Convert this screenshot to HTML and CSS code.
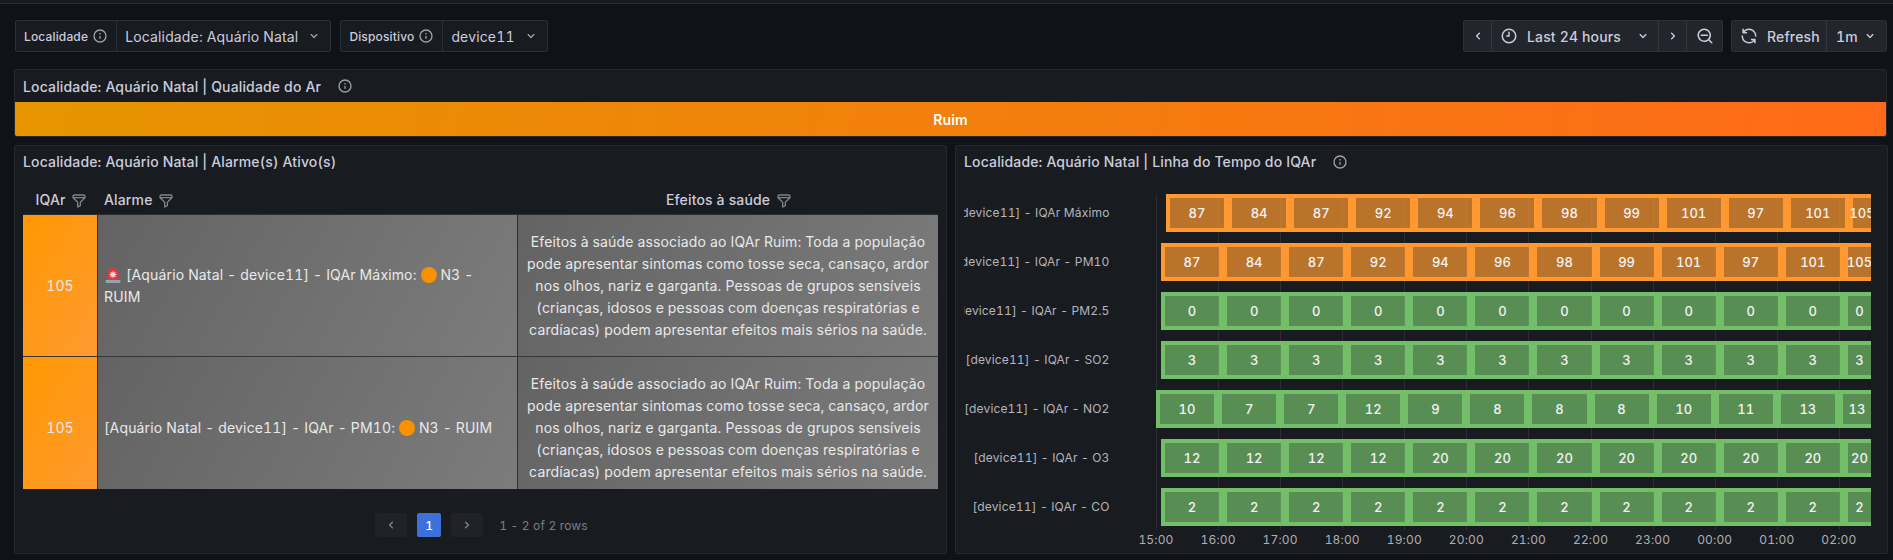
FILE: index.html
```html
<!DOCTYPE html>
<html lang="pt-BR">
  <head>
    <meta charset="UTF-8" />
    <title>Qualidade do Ar</title>
    <link rel="stylesheet" href="styles.css">
  </head>
  <body>
    <svg class="defs" aria-hidden="true">
      <symbol id="i-info" viewBox="0 0 24 24"><path d="M12,2A10,10,0,1,0,22,12,10.01,10.01,0,0,0,12,2Zm0,18a8,8,0,1,1,8-8A8.01,8.01,0,0,1,12,20Zm0-8.5a1,1,0,0,0-1,1v3a1,1,0,0,0,2,0v-3A1,1,0,0,0,12,11.5Zm0-4a1.25,1.25,0,1,0,1.25,1.25A1.25,1.25,0,0,0,12,7.5Z"/></symbol>
      <symbol id="i-down" viewBox="0 0 24 24"><path d="M17,9.17a1,1,0,0,0-1.41,0L12,12.71,8.46,9.17a1,1,0,0,0-1.41,0,1,1,0,0,0,0,1.42l4.24,4.24a1,1,0,0,0,1.42,0L17,10.59A1,1,0,0,0,17,9.17Z"/></symbol>
      <symbol id="i-left" viewBox="0 0 24 24"><path d="M11.29,12l3.54-3.54a1,1,0,0,0,0-1.41,1,1,0,0,0-1.42,0L9.17,11.29a1,1,0,0,0,0,1.42L13.41,17a1,1,0,0,0,.71.29,1,1,0,0,0,.71-.29,1,1,0,0,0,0-1.41Z"/></symbol>
      <symbol id="i-right" viewBox="0 0 24 24"><path d="M14.83,11.29,10.59,7.05a1,1,0,0,0-1.42,0,1,1,0,0,0,0,1.41L12.71,12,9.17,15.54a1,1,0,0,0,0,1.41,1,1,0,0,0,.71.29,1,1,0,0,0,.71-.29l4.24-4.24A1,1,0,0,0,14.83,11.29Z"/></symbol>
      <symbol id="i-clock" viewBox="0 0 24 24"><path d="M12,2A10,10,0,1,0,22,12,10,10,0,0,0,12,2Zm0,18a8,8,0,1,1,8-8A8,8,0,0,1,12,20Zm0-14a1,1,0,0,0-1,1v4H9a1,1,0,0,0,0,2h3a1,1,0,0,0,1-1V7A1,1,0,0,0,12,6Z"/></symbol>
      <symbol id="i-zoom" viewBox="0 0 24 24"><path d="M21.71,20.29,18,16.61A9,9,0,1,0,16.61,18l3.68,3.68a1,1,0,0,0,1.42,0A1,1,0,0,0,21.71,20.29ZM11,18a7,7,0,1,1,7-7A7,7,0,0,1,11,18Zm4-8H7a1,1,0,0,0,0,2h8a1,1,0,0,0,0-2Z"/></symbol>
      <symbol id="i-sync" viewBox="0 0 24 24"><path d="M19.91,15.51H15.38a1,1,0,0,0,0,2h2.4A8,8,0,0,1,4,12a1,1,0,0,0-2,0,10,10,0,0,0,16.88,7.23V21a1,1,0,0,0,2,0V16.5A1,1,0,0,0,19.91,15.51ZM12,2A10,10,0,0,0,5.12,4.77V3a1,1,0,0,0-2,0V7.5a1,1,0,0,0,1,1h4.5a1,1,0,0,0,0-2H6.22A8,8,0,0,1,20,12a1,1,0,0,0,2,0A10,10,0,0,0,12,2Z"/></symbol>
      <symbol id="i-filter" viewBox="0 0 24 24"><path d="M19,2H5A3,3,0,0,0,2,5V6.17a3,3,0,0,0,.25,1.2l0,.06a2.81,2.81,0,0,0,.59.86L9,14.41V21a1,1,0,0,0,.47.85A1,1,0,0,0,10,22a1,1,0,0,0,.45-.11l4-2A1,1,0,0,0,15,19V14.41l6.12-6.12a2.81,2.81,0,0,0,.59-.86l0-.06A3,3,0,0,0,22,6.17V5A3,3,0,0,0,19,2ZM13.29,13.29A1,1,0,0,0,13,14v4.38l-2,1V14a1,1,0,0,0-.29-.71L5.41,8H18.59ZM20,6H4V5A1,1,0,0,1,5,4H19a1,1,0,0,1,1,1Z"/></symbol>
      <symbol id="i-siren" viewBox="0 0 18 18">
        <path d="M3.5 14V7.5a5.5 5.5 0 0 1 11 0V14z" fill="#e0393e"/>
        <path d="M9 4.5l.8 2.2 2.1-1-1 2.1 2.2.8-2.2.8 1 2.1-2.1-1-.8 2.2-.8-2.2-2.1 1 1-2.1-2.2-.8 2.2-.8-1-2.1 2.1 1z" fill="#fbd5d0"/>
        <rect x="1.5" y="14" width="15" height="3" rx="1" fill="#8fa6b8"/>
      </symbol>
    </svg>

    <div class="topline"></div>

    <main class="page">
      <div class="toolbar">
        <div class="var">
          <label class="var-label">Localidade <svg class="ico-16"><use href="#i-info"/></svg></label>
          <div class="var-value">Localidade: Aquário Natal <svg class="ico-16 chev"><use href="#i-down"/></svg></div>
        </div>
        <div class="var">
          <label class="var-label">Dispositivo <svg class="ico-16"><use href="#i-info"/></svg></label>
          <div class="var-value">device11 <svg class="ico-16 chev"><use href="#i-down"/></svg></div>
        </div>
        <div class="spacer"></div>
        <div class="btn-group">
          <button class="btn btn-arrow"><svg class="ico-16"><use href="#i-left"/></svg></button>
          <button class="btn btn-range"><svg class="ico-18"><use href="#i-clock"/></svg><span>Last 24 hours</span><svg class="ico-16 chev-push"><use href="#i-down"/></svg></button>
          <button class="btn btn-arrow"><svg class="ico-16"><use href="#i-right"/></svg></button>
          <button class="btn btn-zoom"><svg class="ico-18"><use href="#i-zoom"/></svg></button>
        </div>
        <div class="btn-group">
          <button class="btn btn-refresh"><svg class="ico-18"><use href="#i-sync"/></svg><span>Refresh</span></button>
          <button class="btn btn-interval"><span>1m</span><svg class="ico-16"><use href="#i-down"/></svg></button>
        </div>
      </div>

      <section class="panel panel-status">
        <h2 class="panel-title">Localidade: Aquário Natal | Qualidade do Ar <svg class="ico-16 title-info"><use href="#i-info"/></svg></h2>
        <div class="status-bar">Ruim</div>
      </section>

      <div class="panels">
        <section class="panel">
          <h2 class="panel-title">Localidade: Aquário Natal | Alarme(s) Ativo(s)</h2>
          <div class="table-wrap">
            <table class="alarms">
              <thead>
                <tr>
                  <th class="center">IQAr <svg class="ico-16 filter"><use href="#i-filter"/></svg></th>
                  <th>Alarme <svg class="ico-16 filter"><use href="#i-filter"/></svg></th>
                  <th class="center">Efeitos à saúde <svg class="ico-16 filter"><use href="#i-filter"/></svg></th>
                </tr>
              </thead>
              <tbody>
                <tr>
                  <td class="cell-iqar">105</td>
                  <td class="cell-gray"><svg class="emoji"><use href="#i-siren"/></svg> [Aquário Natal - device11] - IQAr Máximo: <span class="dot"></span> N3 - RUIM</td>
                  <td class="cell-gray center">Efeitos à saúde associado ao IQAr Ruim: Toda a população pode apresentar sintomas como tosse seca, cansaço, ardor nos olhos, nariz e garganta. Pessoas de grupos sensíveis (crianças, idosos e pessoas com doenças respiratórias e cardíacas) podem apresentar efeitos mais sérios na saúde.</td>
                </tr>
                <tr>
                  <td class="cell-iqar">105</td>
                  <td class="cell-gray">[Aquário Natal - device11] - IQAr - PM10: <span class="dot"></span> N3 - RUIM</td>
                  <td class="cell-gray center">Efeitos à saúde associado ao IQAr Ruim: Toda a população pode apresentar sintomas como tosse seca, cansaço, ardor nos olhos, nariz e garganta. Pessoas de grupos sensíveis (crianças, idosos e pessoas com doenças respiratórias e cardíacas) podem apresentar efeitos mais sérios na saúde.</td>
                </tr>
              </tbody>
            </table>
          </div>
          <div class="pager">
            <button class="page-btn"><svg class="ico-16"><use href="#i-left"/></svg></button>
            <button class="page-num">1</button>
            <button class="page-btn"><svg class="ico-16"><use href="#i-right"/></svg></button>
            <span class="page-info">1 - 2 of 2 rows</span>
          </div>
        </section>

        <section class="panel">
          <h2 class="panel-title">Localidade: Aquário Natal | Linha do Tempo do IQAr <svg class="ico-16 title-info"><use href="#i-info"/></svg></h2>
          <div class="timeline">
            <div class="grid">
              <div class="tick"><span>15:00</span></div>
              <div class="tick"><span>16:00</span></div>
              <div class="tick"><span>17:00</span></div>
              <div class="tick"><span>18:00</span></div>
              <div class="tick"><span>19:00</span></div>
              <div class="tick"><span>20:00</span></div>
              <div class="tick"><span>21:00</span></div>
              <div class="tick"><span>22:00</span></div>
              <div class="tick"><span>23:00</span></div>
              <div class="tick"><span>00:00</span></div>
              <div class="tick"><span>01:00</span></div>
              <div class="tick"><span>02:00</span></div>
            </div>

            <div class="row">
              <div class="row-label"><span>[device11] - IQAr Máximo</span></div>
              <div class="track off-10 orange">
                <div class="seg">87</div><div class="seg">84</div><div class="seg">87</div><div class="seg">92</div><div class="seg">94</div><div class="seg">96</div><div class="seg">98</div><div class="seg">99</div><div class="seg">101</div><div class="seg">97</div><div class="seg">101</div><div class="seg">105</div>
              </div>
            </div>
            <div class="row">
              <div class="row-label"><span>[device11] - IQAr - PM10</span></div>
              <div class="track off-5 orange">
                <div class="seg">87</div><div class="seg">84</div><div class="seg">87</div><div class="seg">92</div><div class="seg">94</div><div class="seg">96</div><div class="seg">98</div><div class="seg">99</div><div class="seg">101</div><div class="seg">97</div><div class="seg">101</div><div class="seg">105</div>
              </div>
            </div>
            <div class="row">
              <div class="row-label"><span>[device11] - IQAr - PM2.5</span></div>
              <div class="track off-5 green">
                <div class="seg">0</div><div class="seg">0</div><div class="seg">0</div><div class="seg">0</div><div class="seg">0</div><div class="seg">0</div><div class="seg">0</div><div class="seg">0</div><div class="seg">0</div><div class="seg">0</div><div class="seg">0</div><div class="seg">0</div>
              </div>
            </div>
            <div class="row">
              <div class="row-label"><span>[device11] - IQAr - SO2</span></div>
              <div class="track off-5 green">
                <div class="seg">3</div><div class="seg">3</div><div class="seg">3</div><div class="seg">3</div><div class="seg">3</div><div class="seg">3</div><div class="seg">3</div><div class="seg">3</div><div class="seg">3</div><div class="seg">3</div><div class="seg">3</div><div class="seg">3</div>
              </div>
            </div>
            <div class="row">
              <div class="row-label"><span>[device11] - IQAr - NO2</span></div>
              <div class="track green">
                <div class="seg">10</div><div class="seg">7</div><div class="seg">7</div><div class="seg">12</div><div class="seg">9</div><div class="seg">8</div><div class="seg">8</div><div class="seg">8</div><div class="seg">10</div><div class="seg">11</div><div class="seg">13</div><div class="seg">13</div>
              </div>
            </div>
            <div class="row">
              <div class="row-label"><span>[device11] - IQAr - O3</span></div>
              <div class="track off-5 green">
                <div class="seg">12</div><div class="seg">12</div><div class="seg">12</div><div class="seg">12</div><div class="seg">20</div><div class="seg">20</div><div class="seg">20</div><div class="seg">20</div><div class="seg">20</div><div class="seg">20</div><div class="seg">20</div><div class="seg">20</div>
              </div>
            </div>
            <div class="row">
              <div class="row-label"><span>[device11] - IQAr - CO</span></div>
              <div class="track off-5 green">
                <div class="seg">2</div><div class="seg">2</div><div class="seg">2</div><div class="seg">2</div><div class="seg">2</div><div class="seg">2</div><div class="seg">2</div><div class="seg">2</div><div class="seg">2</div><div class="seg">2</div><div class="seg">2</div><div class="seg">2</div>
              </div>
            </div>
          </div>
        </section>
      </div>
    </main>
  </body>
</html>
```

FILE: styles.css
```css
* {
  box-sizing: border-box;
}
html,
body {
  margin: 0;
  height: 560px;
  overflow: hidden;
}
body {
  background-color: #111217;
  color: #ccccdc;
  font-family: "Inter", "Liberation Sans", sans-serif;
  font-size: 14px;
  font-variant-numeric: tabular-nums;
  letter-spacing: 0.15px;
}
.defs {
  display: none;
}
.topline {
  height: 4px;
  background-color: #181b1f;
  border-bottom: 1px solid #2b2d33;
}
.page {
  padding: 16px 5px 0 14px;
}

/* icons */
svg {
  fill: currentColor;
  flex: none;
}
.ico-16 {
  width: 16px;
  height: 16px;
}
.ico-18 {
  width: 18px;
  height: 18px;
}

/* toolbar */
.toolbar {
  display: flex;
  height: 32px;
  padding: 0 1px;
  margin-bottom: 17px;
}
.spacer {
  flex: 1;
}
.var {
  display: flex;
  height: 32px;
  margin-right: 9px;
  background-color: #181b1f;
  border: 1px solid #2e3036;
  border-radius: 2px;
}
.var-label {
  display: flex;
  align-items: center;
  gap: 4px;
  padding: 0 8px;
  font-size: 12px;
  font-weight: 500;
  border-right: 1px solid #2e3036;
}
.var-label svg {
  color: #a0a1a9;
}
.var-value {
  display: flex;
  align-items: center;
  gap: 8px;
  padding: 0 8px;
}
.chev {
  color: #a0a1a9;
}
.btn-group {
  display: flex;
  height: 32px;
  margin-right: 8px;
  background-color: #22252b;
  border: 1px solid #2e3036;
  border-radius: 2px;
}
.btn-group:last-child {
  margin-right: 0;
}
.btn {
  display: flex;
  align-items: center;
  height: 100%;
  padding: 0;
  background: none;
  border: 0;
  border-right: 1px solid #35373d;
  color: #ccccdc;
  font: inherit;
  font-weight: 500;
  font-variant-numeric: tabular-nums;
  letter-spacing: inherit;
}
.btn:last-child {
  border-right: 0;
}
.btn-arrow {
  width: 28px;
  justify-content: center;
}
.btn-range {
  width: 167px;
  padding-left: 8px;
  gap: 9px;
}
.chev-push {
  margin-left: 5px;
}
.btn-zoom {
  width: 35px;
  justify-content: center;
}
.btn-refresh {
  width: 95px;
  padding-left: 8px;
  gap: 9px;
}
.btn-interval {
  width: 59px;
  padding-left: 9px;
  gap: 4px;
}

/* panels */
.panel {
  background-color: #181b1f;
  border: 1px solid #26282d;
  border-radius: 2px;
}
.panel-title {
  display: flex;
  align-items: center;
  height: 33px;
  margin: 0;
  padding: 0 0 2px 8px;
  font-size: 14px;
  font-weight: 500;
  letter-spacing: inherit;
  white-space: pre;
}
.title-info {
  margin-left: 12px;
  color: #a0a1a9;
}
.panel-status {
  height: 68px;
  margin-right: 1px;
  margin-bottom: 8px;
}
.panel-status .panel-title {
  height: 32px;
  padding-bottom: 0;
}
.status-bar {
  display: flex;
  align-items: center;
  justify-content: center;
  height: 34px;
  background: linear-gradient(100deg, #e69500, #ff6a18);
  color: #fff;
  font-weight: 600;
  border-radius: 0 0 2px 2px;
}
.panels {
  display: grid;
  grid-template-columns: 933px 933px;
  gap: 8px;
  height: 409px;
}

/* table */
.table-wrap {
  height: 305px;
  margin: 5px 0 0 8px;
  width: 915px;
  overflow: hidden;
}
.alarms {
  width: 915px;
  table-layout: fixed;
  border-collapse: separate;
  border-spacing: 0;
}
.alarms th {
  height: 31px;
  padding: 2px 4px 0 6px;
  font-weight: 500;
  text-align: left;
  border-bottom: 1px solid #2c2e33;
}
.alarms th:first-child {
  width: 75px;
}
.alarms th:nth-child(2),
.alarms th:nth-child(3) {
  width: 420px;
}
.alarms .center {
  text-align: center;
}
.filter {
  margin-left: 2px;
  vertical-align: -4px;
  color: #83848b;
}
.alarms td {
  height: 142px;
  padding: 0 6px;
  line-height: 22px;
  color: #e9e9e9;
  border-right: 1px solid #2c2e33;
  border-bottom: 1px solid #34363c;
}
.alarms td:last-child {
  border-right: 0;
}
.cell-iqar {
  text-align: center;
  background: linear-gradient(120deg, #ff9800, #ff9a32);
  color: #fff;
}
.cell-gray {
  background: linear-gradient(120deg, #636363, #7c7c7c);
}
.emoji {
  width: 18px;
  height: 18px;
  vertical-align: -4px;
}
.dot {
  display: inline-block;
  width: 16px;
  height: 16px;
  vertical-align: -3px;
  background-color: #f79100;
  border-radius: 50%;
}
.pager {
  display: flex;
  align-items: center;
  justify-content: center;
  gap: 10px;
  margin-top: 24px;
  padding-left: 2px;
}
.page-btn {
  display: flex;
  align-items: center;
  justify-content: center;
  width: 32px;
  height: 24px;
  padding: 0;
  background-color: #1f2227;
  border: 0;
  border-radius: 2px;
  color: #83848b;
}
.page-num {
  width: 24px;
  height: 24px;
  padding: 0;
  background-color: #3d71d9;
  border: 0;
  border-radius: 2px;
  color: #fff;
  font: inherit;
  font-size: 12px;
  font-weight: 500;
}
.page-info {
  margin-left: 6px;
  font-size: 12px;
  color: #7b7d85;
}

/* state timeline */
.timeline {
  position: relative;
  display: flex;
  flex-direction: column;
  gap: 11px;
  padding: 15px 0 0 8px;
}
.grid {
  position: absolute;
  top: 16px;
  left: 200px;
  display: flex;
  width: 715px;
  height: 335px;
}
.tick {
  position: relative;
  flex: none;
  width: 62.09px;
  border-left: 1px solid #2c2e34;
}
.tick span {
  position: absolute;
  top: 100%;
  left: -31px;
  width: 60px;
  margin-top: 3px;
  text-align: center;
  font-size: 12px;
  line-height: 14px;
  color: #aeafb6;
}
.row {
  position: relative;
  display: flex;
  height: 38px;
}
.row-label {
  display: flex;
  align-items: center;
  justify-content: flex-end;
  flex: none;
  width: 145.5px;
  margin-right: 46.5px;
  padding-bottom: 1px;
  overflow: hidden;
  white-space: nowrap;
  font-size: 12px;
  color: #b4b5bc;
}
.row-label span {
  flex: none;
}
.track {
  display: flex;
  flex: 1;
  min-width: 0;
  margin-right: 16px;
  overflow: hidden;
}
.off-5 {
  margin-left: 5px;
}
.off-10 {
  margin-left: 10px;
}
.seg {
  display: flex;
  align-items: center;
  justify-content: center;
  flex: none;
  width: 62.09px;
  padding-bottom: 1px;
  border: 4px solid;
  color: #f2f2f2;
  font-size: 13px;
  font-weight: 500;
  letter-spacing: 0;
  white-space: nowrap;
}
.seg:last-child {
  flex: 1;
  min-width: 0;
  border-right: 0;
}
.orange .seg {
  border-color: #ff9830;
  background-color: rgba(255, 152, 48, 0.7);
}
.green .seg {
  border-color: #73bf69;
  background-color: rgba(115, 191, 105, 0.7);
}
```
